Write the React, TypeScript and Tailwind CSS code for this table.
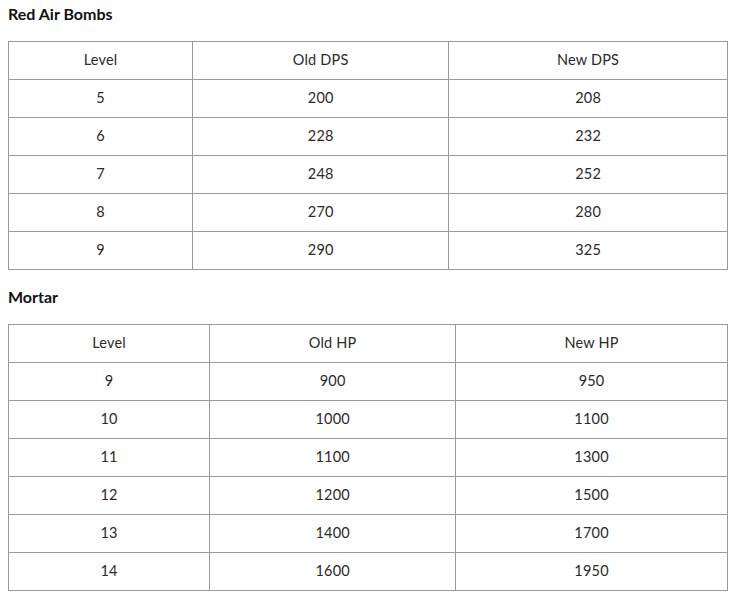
import React from "react";

type Table = { widths: number[]; header: string[]; rows: string[][] };

const t1: Table = {
  widths: [184, 256, 279],
  header: ["Level", "Old DPS", "New DPS"],
  rows: [
    ["5", "200", "208"],
    ["6", "228", "232"],
    ["7", "248", "252"],
    ["8", "270", "280"],
    ["9", "290", "325"],
  ],
};

const t2: Table = {
  widths: [201, 246, 272],
  header: ["Level", "Old HP", "New HP"],
  rows: [
    ["9", "900", "950"],
    ["10", "1000", "1100"],
    ["11", "1100", "1300"],
    ["12", "1200", "1500"],
    ["13", "1400", "1700"],
    ["14", "1600", "1950"],
  ],
};

function DataTable({ t }: { t: Table }) {
  const all = [t.header, ...t.rows];
  return (
    <div className="border-l border-t border-[#9a9a9a] w-[720px]">
      {all.map((r, i) => (
        <div key={i} className="flex">
          {r.map((c, j) => (
            <div
              key={j}
              style={{ width: t.widths[j] + 1 }}
              className="h-[38px] pb-[2px] border-r border-b border-[#9a9a9a] flex items-center justify-center text-[14.5px] tracking-[0.2px] text-[#2a2a2a]"
            >
              {c}
            </div>
          ))}
        </div>
      ))}
    </div>
  );
}

export default function App() {
  return (
    <div
      className="bg-white w-[736px] h-[597px] pl-[8px] pt-[4px]"
      style={{ fontFamily: "Lato, 'Open Sans', sans-serif" }}
    >
      <div className="text-[16px] leading-[20px] font-bold text-[#111]">Red Air Bombs</div>
      <div className="mt-[17px]">
        <DataTable t={t1} />
      </div>
      <div className="mt-[17px] text-[16px] leading-[20px] font-bold text-[#111]">Mortar</div>
      <div className="mt-[17px]">
        <DataTable t={t2} />
      </div>
    </div>
  );
}
